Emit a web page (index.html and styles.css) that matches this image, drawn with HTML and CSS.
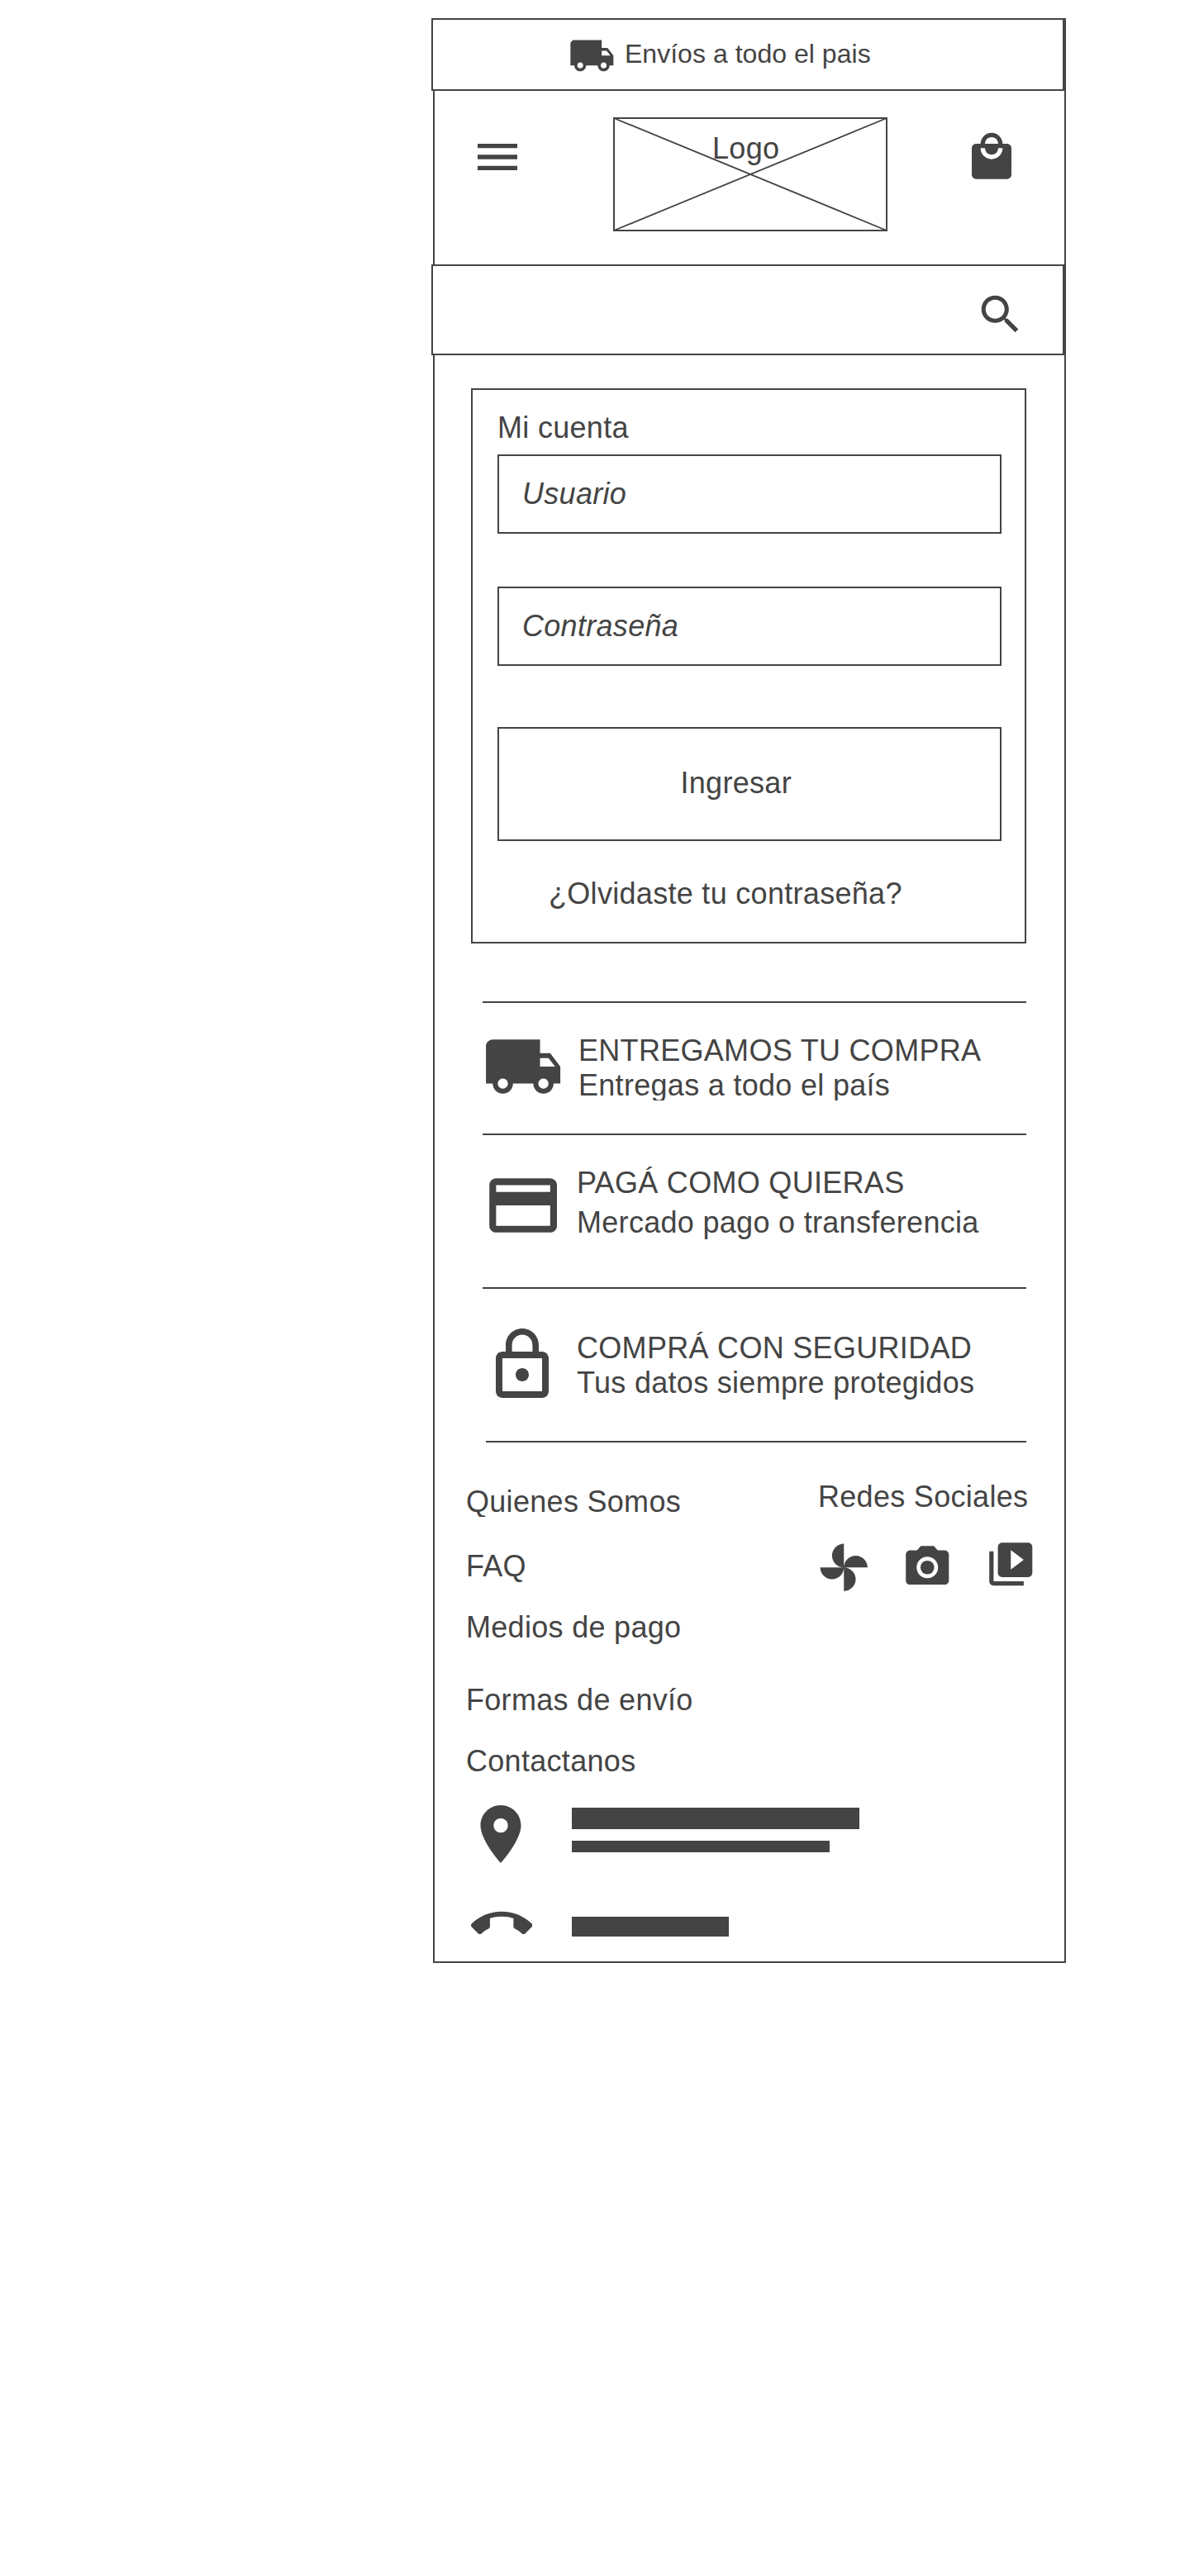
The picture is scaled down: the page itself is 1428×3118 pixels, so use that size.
FILE: index.html
```
<!DOCTYPE html>
<html lang="es">
<head>
<meta charset="utf-8">
<title>Mi cuenta</title>
<link rel="stylesheet" href="styles.css">
</head>
<body>
<main class="screen">
  <div class="topbar">
    <svg class="icon truck-small" viewBox="0 0 24 24"><path d="M20 8h-3V4H3c-1.100 0-2 .9-2 2v11h2c0 1.660 1.340 3 3 3s3-1.340 3-3h6c0 1.660 1.340 3 3 3s3-1.340 3-3h2v-5l-3-4zM6 18.500c-.83 0-1.500-.67-1.500-1.500s.67-1.500 1.500-1.500 1.500.67 1.500 1.500-.67 1.500-1.500 1.500zm13.500-9l1.960 2.500H17V9.500h2.500zM18 18.500c-.83 0-1.500-.67-1.500-1.500s.67-1.500 1.500-1.500 1.500.67 1.500 1.500-.67 1.500-1.500 1.500z"/></svg>
    <span class="topbar-text">Envíos a todo el pais</span>
  </div>

  <header class="header">
    <svg class="icon header-icon" viewBox="0 0 24 24"><path d="M3 18h18v-2H3v2zm0-5h18v-2H3v2zm0-7v2h18V6H3z"/></svg>
    <div class="logo">
      <svg class="logo-cross" viewBox="0 0 332 138"><path d="M1 1L331 137M1 137L331 1"/></svg>
      <span class="logo-text">Logo</span>
    </div>
    <svg class="icon header-icon" viewBox="0 0 24 24"><path d="M19 6h-2c0-2.760-2.240-5-5-5S7 3.240 7 6H5c-1.100 0-2 .9-2 2v12c0 1.100.9 2 2 2h14c1.100 0 2-.9 2-2V8c0-1.100-.9-2-2-2zm-7-3c1.660 0 3 1.340 3 3H9c0-1.660 1.340-3 3-3zm0 10c-2.760 0-5-2.240-5-5h2c0 1.660 1.340 3 3 3s3-1.340 3-3h2c0 2.760-2.240 5-5 5z"/></svg>
  </header>

  <div class="search">
    <svg class="icon search-icon" viewBox="0 0 24 24"><path d="M15.500 14h-.79l-.28-.27C15.410 12.590 16 11.110 16 9.500 16 5.910 13.090 3 9.500 3S3 5.910 3 9.500 5.910 16 9.500 16c1.610 0 3.090-.59 4.230-1.570l.27.28v.79l5 4.990L20.490 19l-4.990-5zm-6 0C7.010 14 5 11.990 5 9.500S7.010 5 9.500 5 14 7.010 14 9.500 11.990 14 9.500 14z"/></svg>
  </div>

  <section class="card">
    <h1 class="card-title">Mi cuenta</h1>
    <div class="field">Usuario</div>
    <div class="field field-password">Contraseña</div>
    <div class="submit">Ingresar</div>
    <div class="forgot">¿Olvidaste tu contraseña?</div>
  </section>

  <section class="features">
    <div class="feature feature-shipping">
      <svg class="icon feature-icon" viewBox="0 0 24 24"><path d="M20 8h-3V4H3c-1.100 0-2 .9-2 2v11h2c0 1.660 1.340 3 3 3s3-1.340 3-3h6c0 1.660 1.340 3 3 3s3-1.340 3-3h2v-5l-3-4zM6 18.500c-.83 0-1.500-.67-1.500-1.500s.67-1.500 1.500-1.500 1.500.67 1.500 1.500-.67 1.500-1.500 1.500zm13.500-9l1.960 2.500H17V9.500h2.500zM18 18.500c-.83 0-1.500-.67-1.500-1.500s.67-1.500 1.500-1.500 1.500.67 1.500 1.500-.67 1.500-1.500 1.500z"/></svg>
      <div class="feature-body">
        <div>ENTREGAMOS TU COMPRA</div>
        <div class="feature-note">Entregas a todo el país</div>
      </div>
    </div>
    <div class="feature feature-payment">
      <svg class="icon feature-icon" viewBox="0 0 24 24"><path d="M20 4H4c-1.110 0-1.990.89-1.990 2L2 18c0 1.110.89 2 2 2h16c1.110 0 2-.89 2-2V6c0-1.110-.89-2-2-2zm0 14H4v-6h16v6zm0-10H4V6h16v2z"/></svg>
      <div class="feature-body">
        <div>PAGÁ COMO QUIERAS</div>
        <div class="feature-note">Mercado pago o transferencia</div>
      </div>
    </div>
    <div class="feature feature-security">
      <svg class="icon feature-icon" viewBox="0 0 24 24"><path d="M12 17c1.100 0 2-.9 2-2s-.9-2-2-2-2 .9-2 2 .9 2 2 2zm6-9h-1V6c0-2.760-2.240-5-5-5S7 3.240 7 6v2H6c-1.100 0-2 .9-2 2v10c0 1.100.9 2 2 2h12c1.100 0 2-.9 2-2V10c0-1.100-.9-2-2-2zM8.900 6c0-1.710 1.390-3.100 3.100-3.100s3.100 1.390 3.100 3.100v2H8.900V6zM18 20H6V10h12v10z"/></svg>
      <div class="feature-body">
        <div>COMPRÁ CON SEGURIDAD</div>
        <div class="feature-note">Tus datos siempre protegidos</div>
      </div>
    </div>
  </section>

  <footer class="footer">
    <div class="footer-rule"></div>
    <div class="footer-columns">
      <nav class="links">
        <div class="link-about">Quienes Somos</div>
        <div class="link-faq">FAQ</div>
        <div class="link-payment">Medios de pago</div>
        <div class="link-shipping">Formas de envío</div>
        <div class="link-contact">Contactanos</div>
      </nav>
      <div class="social">
        <div>Redes Sociales</div>
        <div class="social-icons">
          <svg class="icon social-icon" viewBox="0 0 24 24"><path d="M12 12c0-3 2.500-5.500 5.500-5.500S23 9 23 12H12zm0 0c0 3-2.500 5.500-5.500 5.500S1 15 1 12h11zm0 0c-3 0-5.500-2.500-5.500-5.500S9 1 12 1v11zm0 0c3 0 5.500 2.500 5.500 5.500S15 23 12 23V12z"/></svg>
          <svg class="icon social-icon" viewBox="0 0 24 24"><circle cx="12" cy="12" r="3.2"/><path d="M9 2L7.170 4H4c-1.100 0-2 .9-2 2v12c0 1.100.9 2 2 2h16c1.100 0 2-.9 2-2V6c0-1.100-.9-2-2-2h-3.170L15 2H9zm3 15c-2.760 0-5-2.240-5-5s2.240-5 5-5 5 2.240 5 5-2.240 5-5 5z"/></svg>
          <svg class="icon social-icon social-video" viewBox="0 0 24 24"><path d="M4 6H2v14c0 1.100.9 2 2 2h14v-2H4V6zm16-4H8c-1.100 0-2 .9-2 2v12c0 1.100.9 2 2 2h12c1.100 0 2-.9 2-2V4c0-1.100-.9-2-2-2zm-8 12.500v-9l6 4.500-6 4.500z"/></svg>
        </div>
      </div>
    </div>
    <div class="contact contact-address">
      <svg class="icon pin-icon" viewBox="0 0 24 24"><path d="M12 2C8.130 2 5 5.130 5 9c0 5.250 7 13 7 13s7-7.750 7-13c0-3.870-3.130-7-7-7zm0 9.500a2.500 2.500 0 0 1 0-5 2.500 2.500 0 0 1 0 5z"/></svg>
      <div class="lines">
        <div class="line line-street"></div>
        <div class="line line-city"></div>
      </div>
    </div>
    <div class="contact contact-phone">
      <svg class="icon phone-icon" viewBox="0 0 24 24"><path d="M12 9c-1.600 0-3.150.25-4.600.72v3.100c0 .39-.23.74-.56.9-.98.49-1.870 1.120-2.660 1.850-.18.18-.43.28-.7.28-.28 0-.53-.11-.71-.29L.29 13.080c-.18-.17-.29-.42-.29-.7 0-.28.11-.53.29-.71C3.340 8.780 7.460 7 12 7s8.660 1.780 11.710 4.670c.18.18.29.43.29.71 0 .28-.11.53-.29.71l-2.480 2.480c-.18.18-.43.29-.71.29-.27 0-.52-.11-.7-.28-.79-.74-1.690-1.360-2.670-1.850-.33-.16-.56-.5-.56-.9v-3.100C15.150 9.250 13.600 9 12 9z"/></svg>
      <div class="line line-phone"></div>
    </div>
  </footer>
</main>
</body>
</html>
```
FILE: styles.css
```
*, *::before, *::after { box-sizing: border-box; }

body {
  margin: 0;
  padding: 22px 0 0 524px;
  background: #fff;
  color: #444;
  font: 36px/41px "Liberation Sans", Arial, sans-serif;
  letter-spacing: 0.3px;
  white-space: nowrap;
}

.icon { display: block; flex: none; fill: #444; }

.screen { width: 766px; height: 2354px; border: 2px solid #444; }

/* Full-width bars stick out 2px to the left and cover the frame's edge there */
.topbar, .search {
  display: flex;
  width: 766px;
  margin-left: -4px;
  border: 2px solid #444;
  background: #fff;
}
.topbar {
  height: 88px;
  margin-top: -2px;
  padding: 14.500px 0 0 163.600px;
  font-size: 32px;
  line-height: 36px;
  letter-spacing: 0.03px;
}
.truck-small { width: 56.700px; height: 56.700px; }
.topbar-text { margin: 8.500px 0 0 11.700px; }

.header {
  display: flex;
  height: 210px;
  padding: 32px 0 0 44px;
}
.header-icon { width: 64px; height: 64px; margin-top: 16px; }
.logo {
  display: grid;
  width: 332px;
  height: 138px;
  margin: 0 94px 0 108px;
  border: 2px solid #444;
}
.logo-cross, .logo-text { grid-area: 1 / 1; }
.logo-cross {
  width: 332px;
  height: 138px;
  margin: -2px;
  fill: none;
  stroke: #444;
  stroke-width: 1.800;
}
.logo-text { padding: 15px 0 0 118px; }

.search { height: 110px; padding: 28.300px 0 0 656.300px; }
.search-icon { width: 61.300px; height: 61.300px; }

.card {
  width: 672px;
  height: 672px;
  margin: 40px 0 0 44px;
  padding: 25px 28px 0 30px;
  border: 2px solid #444;
}
.card-title { margin: 0 0 12px; font: inherit; }
.field {
  height: 96px;
  padding: 25px 0 0 28px;
  border: 2px solid #444;
  font-style: italic;
}
.field-password { margin-top: 64px; }
.submit {
  height: 138px;
  margin-top: 74px;
  padding: 45px 0 0 219.500px;
  border: 2px solid #444;
}
.forgot { margin: 43px 0 0 62px; }

.features { width: 658px; margin: 70px 0 0 58px; }
.feature { display: flex; gap: 15.800px; height: 186px; border-top: 2px solid #444; }
.feature-icon { width: 98.200px; height: 98.200px; }
.feature-shipping { gap: 17.800px; height: 160px; }
.feature-shipping .feature-icon { margin-top: 27.500px; }
.feature-body { padding-top: 37px; }
.feature-note { margin-top: 1px; }
/* The text box of this line is a little shorter than its descenders */
.feature-shipping .feature-note { height: 39px; overflow: hidden; }
.feature-payment .feature-icon { margin-top: 35.700px; }
.feature-payment .feature-note { margin-top: 7px; }
.feature-security { gap: 18px; }
.feature-security .feature-icon { width: 96px; height: 96px; margin-top: 44px; }
.feature-security .feature-body { padding-top: 51px; }

.footer-rule { width: 654px; height: 2px; margin-left: 62px; background: #444; }
.footer-columns { display: flex; height: 406px; padding: 45px 0 0 38px; }
.links { width: 426px; padding-top: 6px; }
.link-about { height: 39px; overflow: hidden; }
.link-faq { margin-top: 39px; }
.link-payment { margin-top: 33px; }
.link-shipping { margin-top: 47px; }
.link-contact { margin-top: 33px; }
.social-icons { display: flex; gap: 39px; margin: 33.700px 0 0 -0.300px; }
.social-icon { width: 62.500px; height: 62.500px; }
.social-video { margin: -4px 0 0 -1px; }

.contact { display: flex; }
.contact-address { height: 140px; padding: 25.900px 0 0 38.200px; }
.pin-icon { width: 84px; height: 84px; }
.lines { padding: 10.100px 0 0 43.800px; }
.line { background: #444; }
.line-street { width: 348px; height: 26px; }
.line-city { width: 312px; height: 14px; margin-top: 14px; }
.contact-phone { padding-left: 44px; }
.phone-icon { width: 74.300px; height: 74.300px; }
.line-phone { width: 190px; height: 24px; margin: 28px 0 0 47.700px; }
```
